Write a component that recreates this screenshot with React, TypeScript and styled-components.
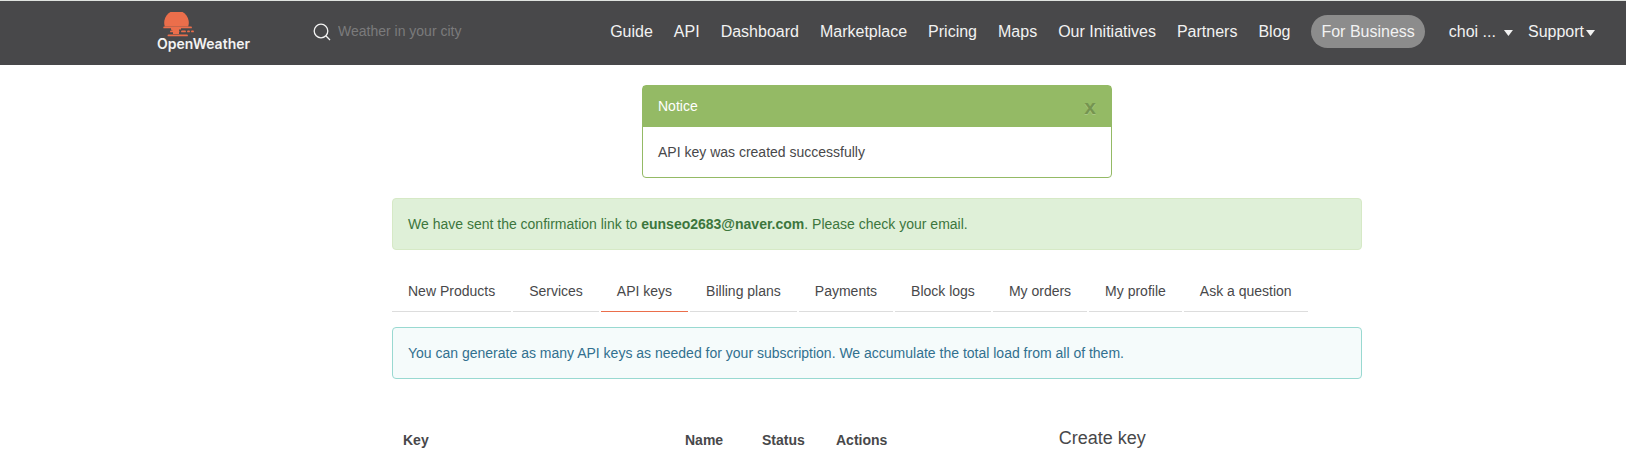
import React from "react";
import styled, { createGlobalStyle } from "styled-components";

const GlobalStyle = createGlobalStyle`
  *, *::before, *::after { box-sizing: border-box; }
  body {
    margin: 0;
    background: #fff;
    color: #48484a;
    font: 14px/20px "Liberation Sans", Arial, sans-serif;
  }
`;

const Header = styled.header`
  display: flex;
  align-items: flex-start;
  height: 65px;
  padding: 0 31px 0 157px;
  border-top: 1px solid #dfe3df;
  background: #48484a;
`;

const Brand = styled.a`
  display: flex;
  flex-direction: column;
  width: 156px;
  padding-top: 11px;
  color: #f2f2f2;
  font: 600 14px/14px Inter, sans-serif;
  text-decoration: none;

  svg {
    display: block;
    margin-left: 5px;
  }
`;

const SearchBox = styled.label`
  display: flex;
  align-items: center;
  gap: 7px;
  padding-top: 20px;
`;

const SearchInput = styled.input`
  width: 160px;
  padding: 0 0 2px;
  border: 0;
  outline: 0;
  background: transparent;
  color: #fff;
  font: 14px/20px "Liberation Sans", Arial, sans-serif;

  &::placeholder {
    color: #7b7b7c;
    opacity: 1;
  }
`;

const Nav = styled.nav`
  display: flex;
  align-items: center;
  gap: 21px;
  margin-left: auto;
  padding-top: 14px;
  white-space: nowrap;
`;

const NavLink = styled.a<{ $pill?: boolean }>`
  padding: ${(p) => (p.$pill ? "0 10px" : "0")};
  border-radius: 17px;
  background: ${(p) => (p.$pill ? "#8c8c8c" : "transparent")};
  color: #f2f2f2;
  font-size: 16px;
  line-height: 33px;
  text-decoration: none;
`;

const MenuGroup = styled.div`
  display: flex;
  gap: 15px;
  padding-left: 3px;
`;

const MenuButton = styled.button<{ $gap: number }>`
  display: flex;
  align-items: center;
  gap: ${(p) => p.$gap}px;
  padding: 0;
  border: 0;
  background: none;
  color: #f2f2f2;
  font: 16px/33px "Liberation Sans", Arial, sans-serif;

  &::after {
    content: "";
    width: 9px;
    height: 6px;
    margin-top: 3px;
    background: #f2f2f2;
    clip-path: polygon(0 0, 100% 0, 50% 100%);
  }
`;

const Main = styled.main`
  padding: 20px 264px 0 392px;
`;

const Notice = styled.section`
  max-width: 470px;
  margin: 0 auto 20px;
  border: 1px solid #94ba65;
  border-radius: 4px;
`;

const NoticeHead = styled.div`
  display: flex;
  justify-content: space-between;
  height: 41px;
  padding: 10px 15px;
  background: #94ba65;
  color: #fff;
`;

const NoticeBody = styled.p`
  margin: 0;
  padding: 15px;
`;

const CloseButton = styled.button`
  padding: 0;
  border: 0;
  background: none;
  color: #000;
  font: bold 21px/21px "Liberation Sans", Arial, sans-serif;
  text-shadow: 0 1px 0 #fff;
  opacity: 0.2;
`;

const Alert = styled.div<{ $tone: "success" | "info" }>`
  padding: 15px;
  border: 1px solid ${(p) => (p.$tone === "success" ? "#d6e9c6" : "#99d9d1")};
  border-radius: 4px;
  background: ${(p) => (p.$tone === "success" ? "#dff0d8" : "#f5fbfb")};
  color: ${(p) => (p.$tone === "success" ? "#3c763d" : "#31708f")};
`;

const Tabs = styled.nav`
  display: flex;
  gap: 2px;
  margin: 20px 0 15px;
  white-space: nowrap;
`;

const Tab = styled.a<{ $active?: boolean }>`
  padding: 11px 16px 10px;
  border-bottom: 1px solid ${(p) => (p.$active ? "#eb6e4b" : "#ddd")};
  color: #48484a;
  text-decoration: none;
`;

const Columns = styled.div`
  display: grid;
  grid-template-columns: 2fr 1fr;
  margin: 0 -15px;
`;

const Column = styled.div`
  padding: 50px 15px 0;
`;

const KeyTable = styled.table`
  width: 100%;
  table-layout: fixed;
  border-collapse: collapse;
`;

const HeadCell = styled.th<{ $width?: string }>`
  width: ${(p) => p.$width ?? "auto"};
  padding: 1px 0 0 11px;
  text-align: left;
`;

const FormTitle = styled.h4`
  margin: 0;
  font-size: 18px;
  font-weight: 400;
  line-height: 18px;
`;

const links = ["Guide", "API", "Dashboard", "Marketplace", "Pricing", "Maps", "Our Initiatives", "Partners", "Blog"];
const tabs = [
  "New Products",
  "Services",
  "API keys",
  "Billing plans",
  "Payments",
  "Block logs",
  "My orders",
  "My profile",
  "Ask a question",
];

const SunLogo = () => (
  <svg width="34" height="25" viewBox="0 0 34 25" aria-hidden="true">
    <path d="M2.800 14.500A12.300 12.300 0 1 1 26.200 14.500Z" fill="#eb6e4b" />
    <path d="M9 15H19V17.400H17V22H11V19L9 17.400Z" fill="#eb6e4b" />
    <path
      d="M2.200 15.400H29M9 19.400H16.500M20 19.400H23M26 19.400H27M30 19.400H31M6.500 23.400H25"
      stroke="#eb6e4b"
      strokeWidth="1.900"
      strokeLinecap="round"
    />
  </svg>
);

const App = () => (
  <>
    <GlobalStyle />
    <Header>
      <Brand href="#">
        <SunLogo />
        OpenWeather
      </Brand>
      <SearchBox>
        <svg width="18" height="18" viewBox="0 0 18 18" fill="none" stroke="#f2f2f2" strokeWidth="1.300" aria-hidden="true">
          <circle cx="8" cy="8" r="6.800" />
          <path d="M12.800 12.800L17 17" />
        </svg>
        <SearchInput type="text" aria-label="Weather in your city" placeholder="Weather in your city" />
      </SearchBox>
      <Nav>
        {links.map((label) => (
          <NavLink key={label} href="#">
            {label}
          </NavLink>
        ))}
        <NavLink href="#" $pill>
          For Business
        </NavLink>
        <MenuGroup>
          <MenuButton type="button" $gap={8}>
            choi ...
          </MenuButton>
          <MenuButton type="button" $gap={2}>
            Support
          </MenuButton>
        </MenuGroup>
      </Nav>
    </Header>
    <Main>
      <Notice>
        <NoticeHead>
          Notice
          <CloseButton type="button" aria-label="Close">
            x
          </CloseButton>
        </NoticeHead>
        <NoticeBody>API key was created successfully</NoticeBody>
      </Notice>
      <Alert $tone="success">
        We have sent the confirmation link to <strong>eunseo2683@naver.com</strong>. Please check your email.
      </Alert>
      <Tabs>
        {tabs.map((label) => (
          <Tab key={label} href="#" $active={label === "API keys"}>
            {label}
          </Tab>
        ))}
      </Tabs>
      <Alert $tone="info">
        You can generate as many API keys as needed for your subscription. We accumulate the total load from all of
        them.
      </Alert>
      <Columns>
        <Column>
          <KeyTable>
            <thead>
              <tr>
                <HeadCell $width="282px">Key</HeadCell>
                <HeadCell $width="77px">Name</HeadCell>
                <HeadCell $width="74px">Status</HeadCell>
                <HeadCell>Actions</HeadCell>
              </tr>
            </thead>
          </KeyTable>
        </Column>
        <Column>
          <FormTitle>Create key</FormTitle>
        </Column>
      </Columns>
    </Main>
  </>
);

export default App;
